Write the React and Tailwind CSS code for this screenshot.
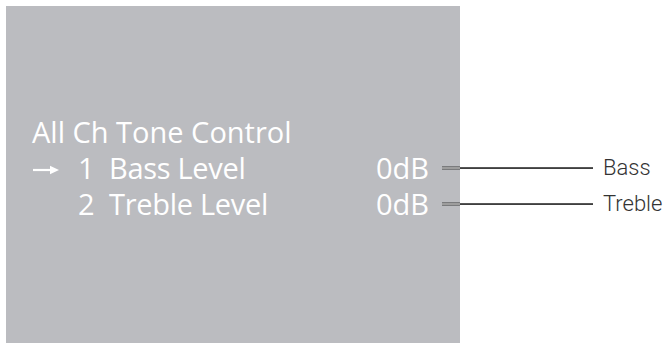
import React from "react";

const rows = [
  { num: "1", name: "Bass Level", value: "0dB", tag: "Bass", active: true },
  { num: "2", name: "Treble Level", value: "0dB", tag: "Treble", active: false },
];

const Arrow = () => (
  <svg width="26" height="10" viewBox="0 0 26 10">
    <line x1="0" y1="5" x2="19" y2="5" stroke="white" strokeWidth="2.2" />
    <polygon points="17,0.8 26,5 17,9.2" fill="white" />
  </svg>
);

// leader line: short outlined white stub inside the panel, then a black rule
const Leader = () => (
  <svg width="151" height="6" viewBox="0 0 151 6" className="shrink-0">
    <rect x="0" y="1.5" width="18" height="3" fill="#3a3a3a" />
    <rect x="0" y="2.5" width="18" height="1" fill="white" />
    <rect x="18" y="2.3" width="133" height="1.5" fill="#111" />
  </svg>
);

const App = () => {
  return (
    <div className="w-[665px] h-[343px] bg-white overflow-hidden">
      <div className="ml-[6px] mt-[6px] w-[454px] h-[337px] bg-[#bbbcc0] pt-[108px] pl-[27px]">
        <div
          className="text-white text-[29px] leading-[36px] whitespace-nowrap"
          style={{ fontFamily: "'Open Sans', 'Noto Sans', sans-serif" }}
        >
          <div className="-ml-[1px]">All Ch Tone Control</div>
          {rows.map((r) => (
            <div key={r.num} className="flex items-center w-[660px]">
              <div className="w-[45px] shrink-0 flex items-center pt-[3px]">
                {r.active && <Arrow />}
              </div>
              <div className="w-[31px] shrink-0">{r.num}</div>
              <div className="w-[267px] shrink-0 tracking-[-0.3px]">{r.name}</div>
              <div className="w-[66px] shrink-0">{r.value}</div>
              <Leader />
              <div
                className="ml-[10px] shrink-0 text-[22px] font-light text-[#333]"
                style={{ fontFamily: "Roboto, 'Liberation Sans', sans-serif" }}
              >
                {r.tag}
              </div>
            </div>
          ))}
        </div>
      </div>
    </div>
  );
};

export default App;
